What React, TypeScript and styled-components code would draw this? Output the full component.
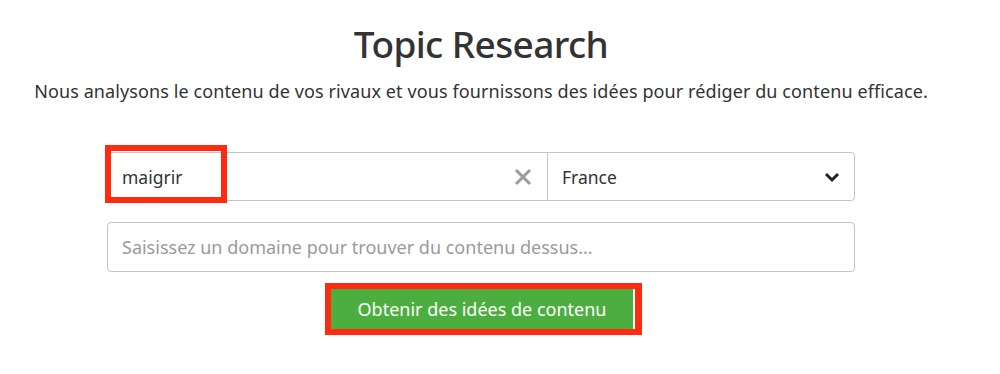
import React from "react";
import styled, { createGlobalStyle } from "styled-components";

const Global = createGlobalStyle`
  html, body { margin: 0; padding: 0; background: #ffffff; }
  body { font-family: "Noto Sans", "Open Sans", sans-serif; color: #333333; }
  * { box-sizing: border-box; }
`;

const Page = styled.div`
  width: 962px;
  display: flex;
  flex-direction: column;
  align-items: center;
  padding-top: 22px;
`;

const Title = styled.h1`
  margin: 0;
  font-size: 37px;
  font-weight: 500;
  line-height: 44px;
  color: #333333;
  letter-spacing: -0.6px;
`;

const Subtitle = styled.p`
  margin: 14px 0 0;
  font-size: 18px;
  line-height: 22px;
  color: #333333;
  letter-spacing: 0.1px;
  white-space: nowrap;
`;

const Form = styled.div`
  width: 748px;
  margin-top: 50px;
  display: flex;
  flex-direction: column;
  align-items: center;
  gap: 21px;
`;

const Row = styled.div`
  width: 100%;
  height: 49px;
  display: flex;
  border: 1px solid #c4c4c4;
  border-radius: 4px;
  background: #fff;
`;

const KeywordCell = styled.div`
  position: relative;
  flex: 1;
  display: flex;
  align-items: center;
  padding: 0 14px;
  border-right: 1px solid #c4c4c4;
`;

const Value = styled.span`
  flex: 1;
  font-size: 17.5px;
  color: #333333;
`;

const ClearButton = styled.span`
  display: flex;
  align-items: center;
  justify-content: center;
  width: 24px;
  height: 24px;
  margin-right: -2px;
`;

const Highlight = styled.div`
  position: absolute;
  left: -3px;
  top: -8px;
  width: 122px;
  height: 58px;
  border: 6px solid #ff2a0f;
  pointer-events: none;
`;

const CountryCell = styled.div`
  width: 306px;
  display: flex;
  align-items: center;
  justify-content: space-between;
  padding: 0 14px 0 14px;
`;

const DomainInput = styled.div`
  width: 100%;
  height: 50px;
  display: flex;
  align-items: center;
  padding: 0 14px;
  border: 1px solid #c4c4c4;
  border-radius: 4px;
  font-size: 18px;
  color: #9a9a9a;
`;

const ButtonFrame = styled.div`
  margin-top: -10px;
  margin-left: 5px;
  display: flex;
  border: 6px solid #ff2a0f;
  border-right-width: 7px;
  padding-right: 2px;
  background: #ffffff;
`;

const Button = styled.button`
  width: 302px;
  height: 40px;
  border: none;
  background: #4cae3f;
  color: #ffffff;
  font-family: "Noto Sans", "Open Sans", sans-serif;
  font-size: 18px;
  padding: 0;
  cursor: pointer;
`;

export default function App() {
  return (
    <>
      <Global />
      <Page>
        <Title>Topic Research</Title>
        <Subtitle>
          Nous analysons le contenu de vos rivaux et vous fournissons des idées pour rédiger du contenu efficace.
        </Subtitle>
        <Form>
          <Row>
            <KeywordCell>
              <Value>maigrir</Value>
              <ClearButton>
                <svg width="18" height="18" viewBox="0 0 18 18">
                  <path d="M2 2 L16 16 M16 2 L2 16" stroke="#9b9b9b" strokeWidth="3" strokeLinecap="butt" />
                </svg>
              </ClearButton>
              <Highlight />
            </KeywordCell>
            <CountryCell>
              <Value>France</Value>
              <svg width="16" height="12" viewBox="0 0 16 12">
                <path d="M2 3 L8 9 L14 3" stroke="#222" strokeWidth="3" fill="none" />
              </svg>
            </CountryCell>
          </Row>
          <DomainInput>Saisissez un domaine pour trouver du contenu dessus...</DomainInput>
          <ButtonFrame>
            <Button>Obtenir des idées de contenu</Button>
          </ButtonFrame>
        </Form>
      </Page>
    </>
  );
}
